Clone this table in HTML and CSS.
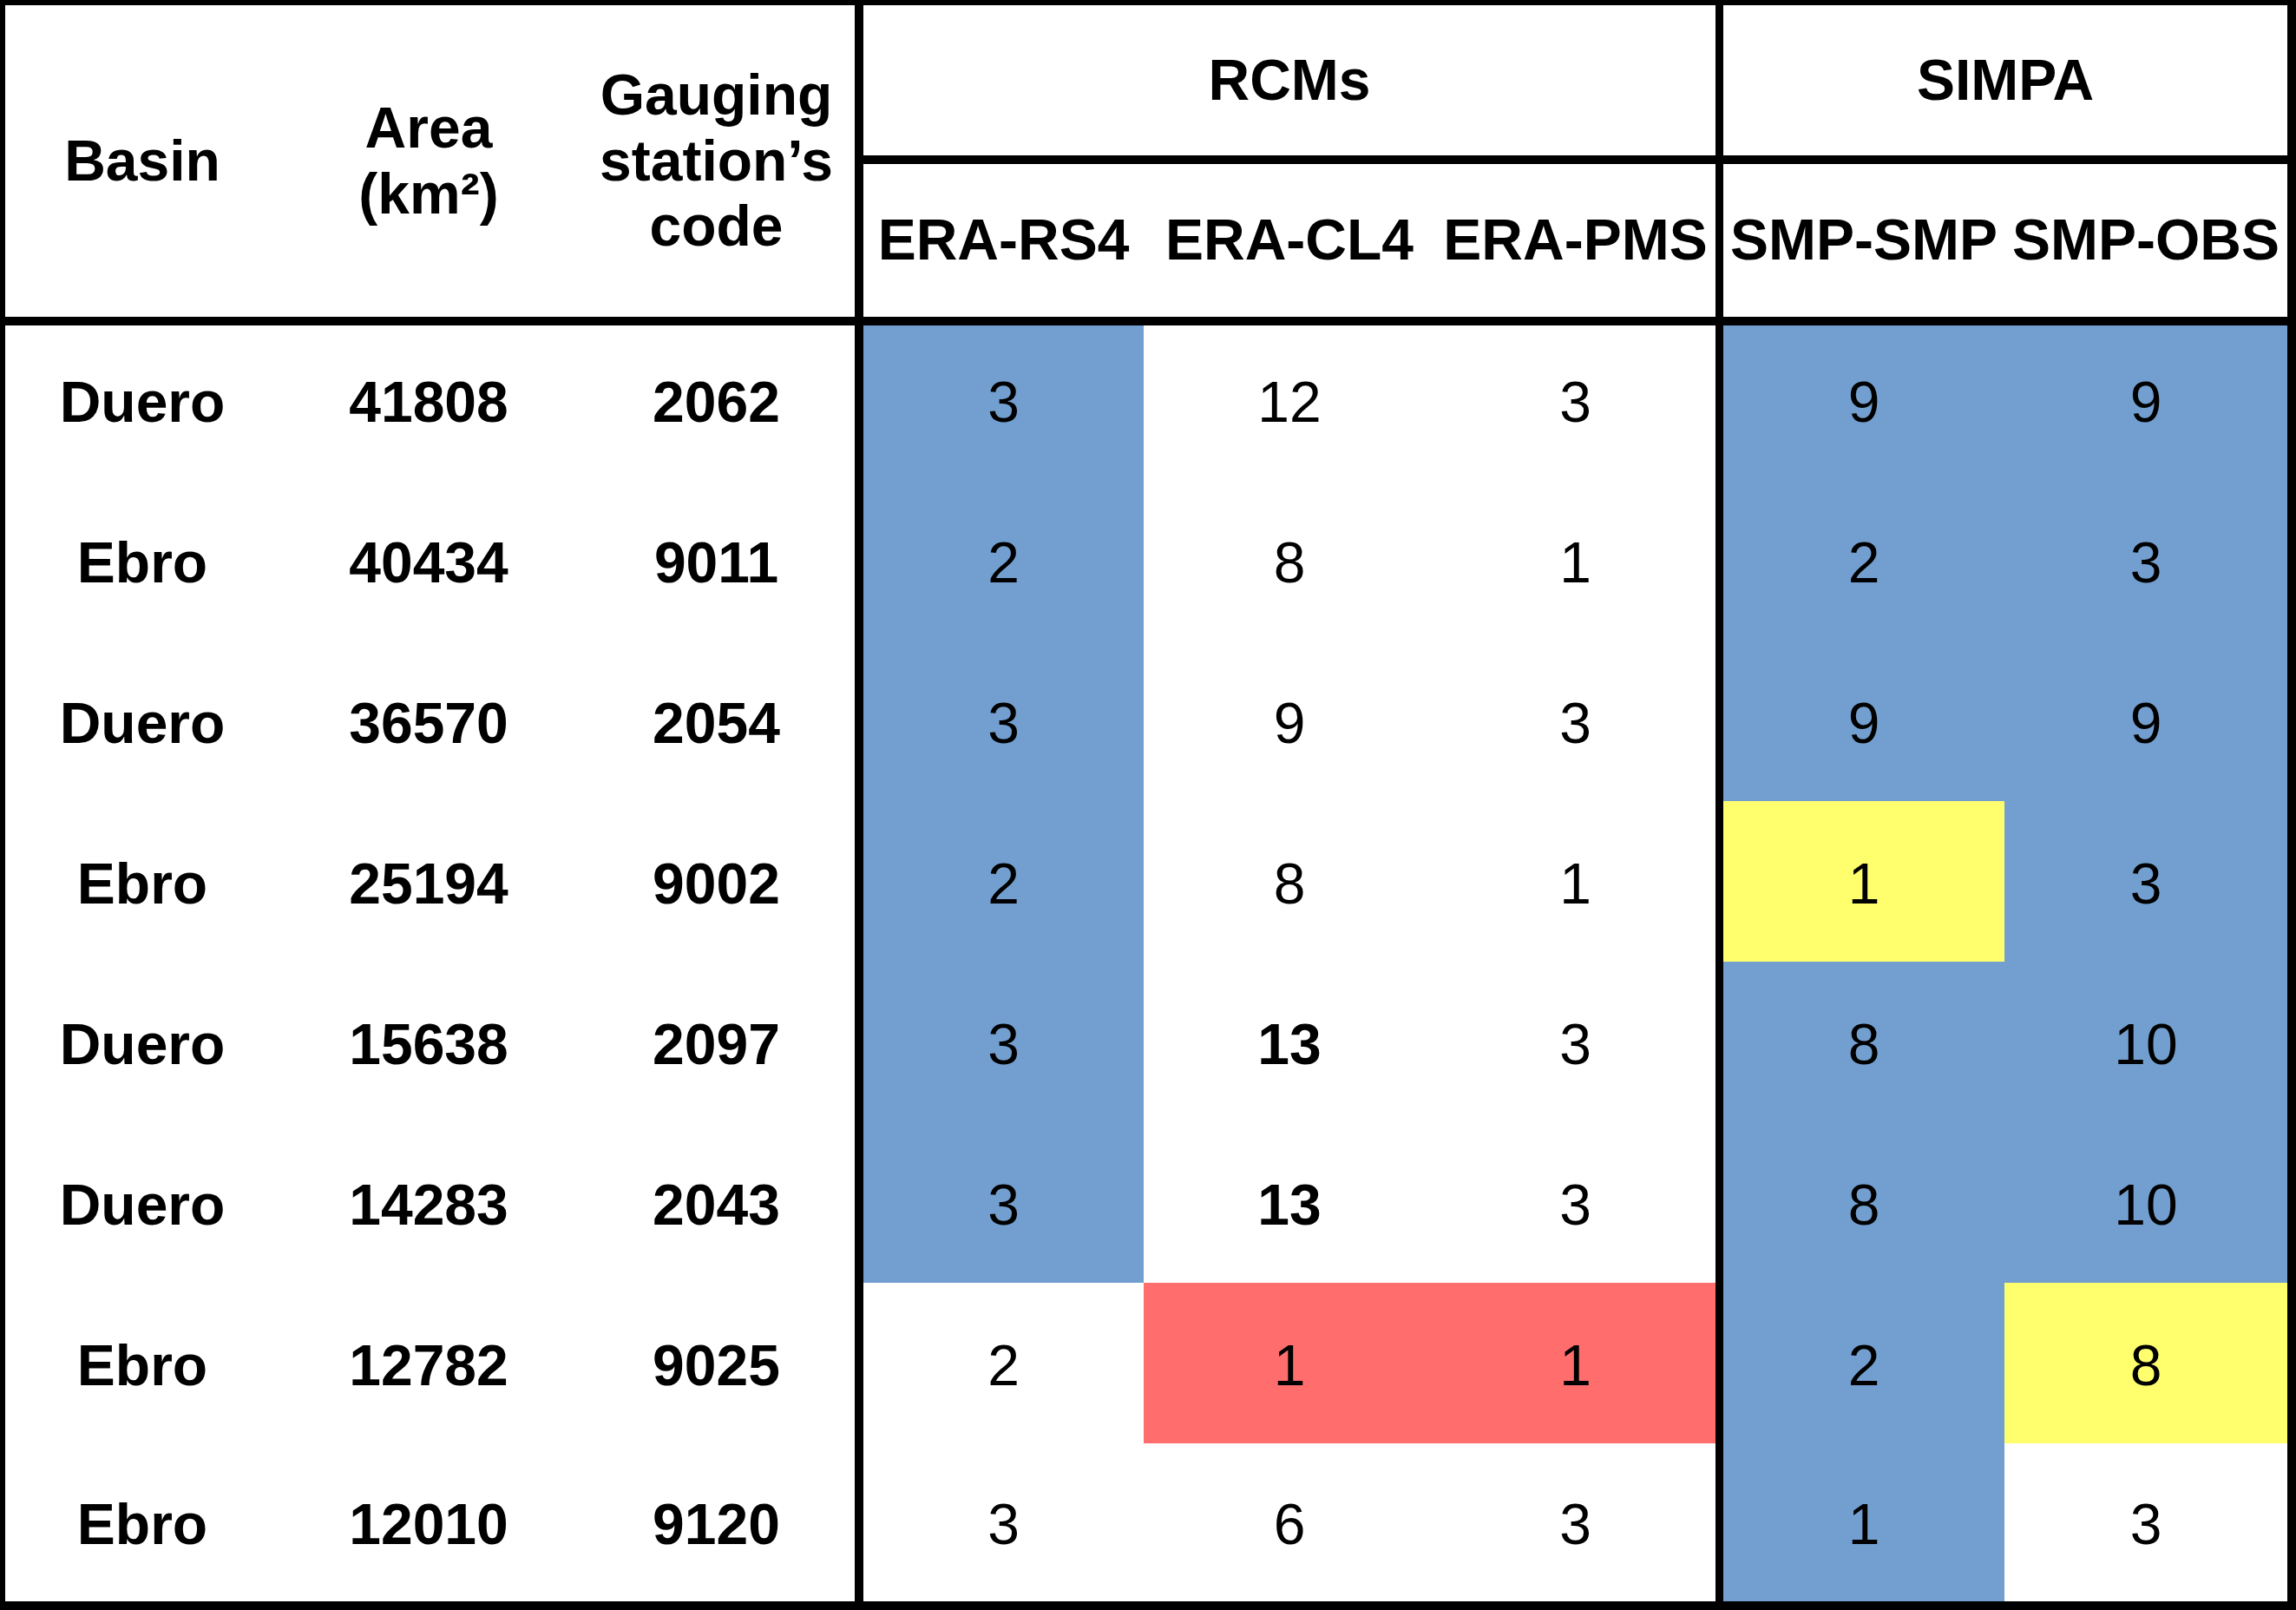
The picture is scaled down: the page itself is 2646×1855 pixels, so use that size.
FILE: index.html
```html
<!DOCTYPE html>
<html lang="en">
<head>
<meta charset="utf-8">
<title>Basins table</title>
<link rel="stylesheet" href="styles.css">
</head>
<body>
<div class="table">
  <div class="cell head span-rows">Basin</div>
  <div class="cell head span-rows">Area<br>(km²)</div>
  <div class="cell head span-rows sep">Gauging<br>station’s<br>code</div>
  <div class="cell head group sep2 span-3">RCMs</div>
  <div class="cell head group span-2">SIMPA</div>

  <div class="cell head sub">ERA-RS4</div>
  <div class="cell head sub">ERA-CL4</div>
  <div class="cell head sub sep2">ERA-PMS</div>
  <div class="cell head sub">SMP-SMP</div>
  <div class="cell head sub">SMP-OBS</div>

  <div class="cell top b">Duero</div><div class="cell top b">41808</div><div class="cell top b sep">2062</div>
  <div class="cell top blue">3</div><div class="cell top">12</div><div class="cell top sep2">3</div><div class="cell top blue">9</div><div class="cell top blue">9</div>

  <div class="cell body b">Ebro</div><div class="cell body b">40434</div><div class="cell body b sep">9011</div>
  <div class="cell body blue">2</div><div class="cell body">8</div><div class="cell body sep2">1</div><div class="cell body blue">2</div><div class="cell body blue">3</div>

  <div class="cell body b">Duero</div><div class="cell body b">36570</div><div class="cell body b sep">2054</div>
  <div class="cell body blue">3</div><div class="cell body">9</div><div class="cell body sep2">3</div><div class="cell body blue">9</div><div class="cell body blue">9</div>

  <div class="cell body b">Ebro</div><div class="cell body b">25194</div><div class="cell body b sep">9002</div>
  <div class="cell body blue">2</div><div class="cell body">8</div><div class="cell body sep2">1</div><div class="cell body yellow">1</div><div class="cell body blue">3</div>

  <div class="cell body b">Duero</div><div class="cell body b">15638</div><div class="cell body b sep">2097</div>
  <div class="cell body blue">3</div><div class="cell body b">13</div><div class="cell body sep2">3</div><div class="cell body blue">8</div><div class="cell body blue">10</div>

  <div class="cell body b">Duero</div><div class="cell body b">14283</div><div class="cell body b sep">2043</div>
  <div class="cell body blue">3</div><div class="cell body b">13</div><div class="cell body sep2">3</div><div class="cell body blue">8</div><div class="cell body blue">10</div>

  <div class="cell body b">Ebro</div><div class="cell body b">12782</div><div class="cell body b sep">9025</div>
  <div class="cell body">2</div><div class="cell body red">1</div><div class="cell body red sep2">1</div><div class="cell body blue">2</div><div class="cell body yellow">8</div>

  <div class="cell body b">Ebro</div><div class="cell body b">12010</div><div class="cell body b sep">9120</div>
  <div class="cell body">3</div><div class="cell body">6</div><div class="cell body sep2">3</div><div class="cell body blue">1</div><div class="cell body">3</div>
</div>
</body>
</html>
```

FILE: styles.css
```css
* {
  box-sizing: border-box;
}

html, body {
  margin: 0;
  padding: 0;
  background: #ffffff;
}

body {
  font-family: "Liberation Sans", Arial, sans-serif;
  font-size: 66px;
  color: #000000;
}

.table {
  width: 2646px;
  height: 1855px;
  display: grid;
  grid-template-columns: 316px 344px 329px 323px 336px 332px 324px 326px;
  grid-template-rows: 183px 186px 177.7px repeat(6, 185px) 1fr;
  border-top: 6px solid #000;
  border-left: 6px solid #000;
  border-right: 10px solid #000;
  border-bottom: 10px solid #000;
  background: #fff;
}

.cell {
  display: flex;
  align-items: center;
  justify-content: center;
  text-align: center;
  line-height: 1.15;
  white-space: nowrap;
}

.body {
  padding-top: 7px;
}

.head {
  font-weight: bold;
}

.span-rows {
  grid-row: span 2;
  border-bottom: 10px solid #000;
}

.span-3 {
  grid-column: span 3;
}

.span-2 {
  grid-column: span 2;
}

.group {
  border-bottom: 10px solid #000;
}

.sub {
  border-bottom: 10px solid #000;
}

.sep {
  border-right: 10px solid #000;
}

.sep2 {
  border-right: 9px solid #000;
}

.b {
  font-weight: bold;
}

.blue {
  background: #729fcf;
}

.yellow {
  background: #ffff6d;
}

.red {
  background: #ff6d6d;
}
```
